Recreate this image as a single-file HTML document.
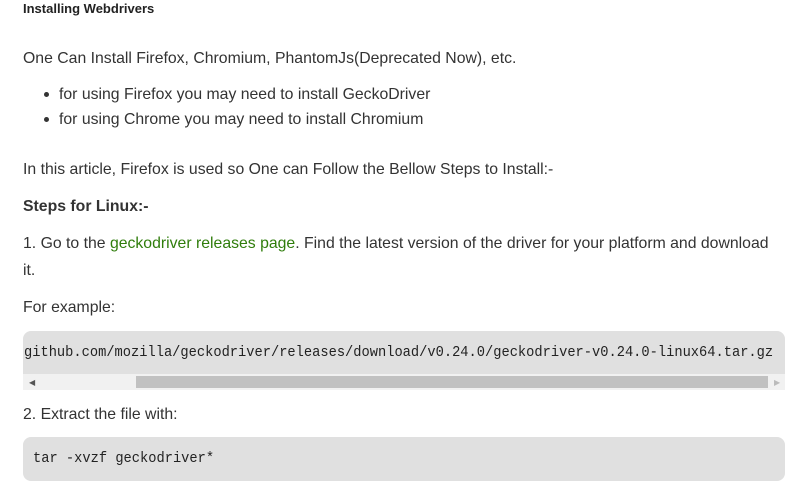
<!DOCTYPE html>
<html><head><style>
body{margin:0;background:#fff;width:812px;height:489px;overflow:hidden;font-family:"Liberation Sans",sans-serif;color:#333;}
.a{position:absolute;left:23px;font-size:15.8px;white-space:nowrap;line-height:20px}
.t{position:absolute;left:23px;top:0;font-size:13px;font-weight:bold;color:#222;line-height:17px}
.box{position:absolute;left:23px;width:762px;background:#e0e0e0;border-radius:8px;overflow:hidden}
.mono{font-family:"Liberation Mono",monospace;font-size:14.6px;color:#222;position:absolute;white-space:nowrap;line-height:18px;transform-origin:left center}
.bul{position:absolute;left:44px;width:5px;height:5px;border-radius:50%;background:#333}
</style></head><body>
<div class="t">Installing Webdrivers</div>
<div class="a" style="top:49px">One Can Install Firefox, Chromium, PhantomJs(Deprecated Now), etc.</div>
<div class="bul" style="top:92px"></div><div class="a" style="left:59px;top:85px">for using Firefox you may need to install GeckoDriver</div>
<div class="bul" style="top:117px"></div><div class="a" style="left:59px;top:110px">for using Chrome you may need to install Chromium</div>
<div class="a" style="top:160px">In this article, Firefox is used so One can Follow the Bellow Steps to Install:-</div>
<div class="a" style="top:197px;font-weight:bold">Steps for Linux:-</div>
<div class="a" style="top:234px">1. Go to the <span style="color:#2f7d0b">geckodriver releases page</span>. Find the latest version of the driver for your platform and download</div>
<div class="a" style="top:261px">it.</div>
<div class="a" style="top:298px">For example:</div>
<div class="box" style="top:331px;height:59px;border-radius:8px 8px 0 0">
 <div class="mono" style="left:1px;top:13px;transform:scaleX(0.94)">github.com/mozilla/geckodriver/releases/download/v0.24.0/geckodriver-v0.24.0-linux64.tar.gz</div>
 <div style="position:absolute;left:0;top:43px;width:762px;height:16px;background:#f1f1f1"></div>
 <div style="position:absolute;left:113px;top:45px;width:632px;height:12px;background:#c1c1c1"></div>
 <div style="position:absolute;left:6px;top:47px;font-size:8px;color:#555">◀</div>
 <div style="position:absolute;left:751px;top:47px;font-size:8px;color:#bbb">▶</div>
</div>
<div class="a" style="top:405px">2. Extract the file with:</div>
<div class="box" style="top:437px;height:44px">
 <div class="mono" style="left:10px;top:13px;transform:scaleX(0.94)">tar -xvzf geckodriver*</div>
</div>
</body></html>
